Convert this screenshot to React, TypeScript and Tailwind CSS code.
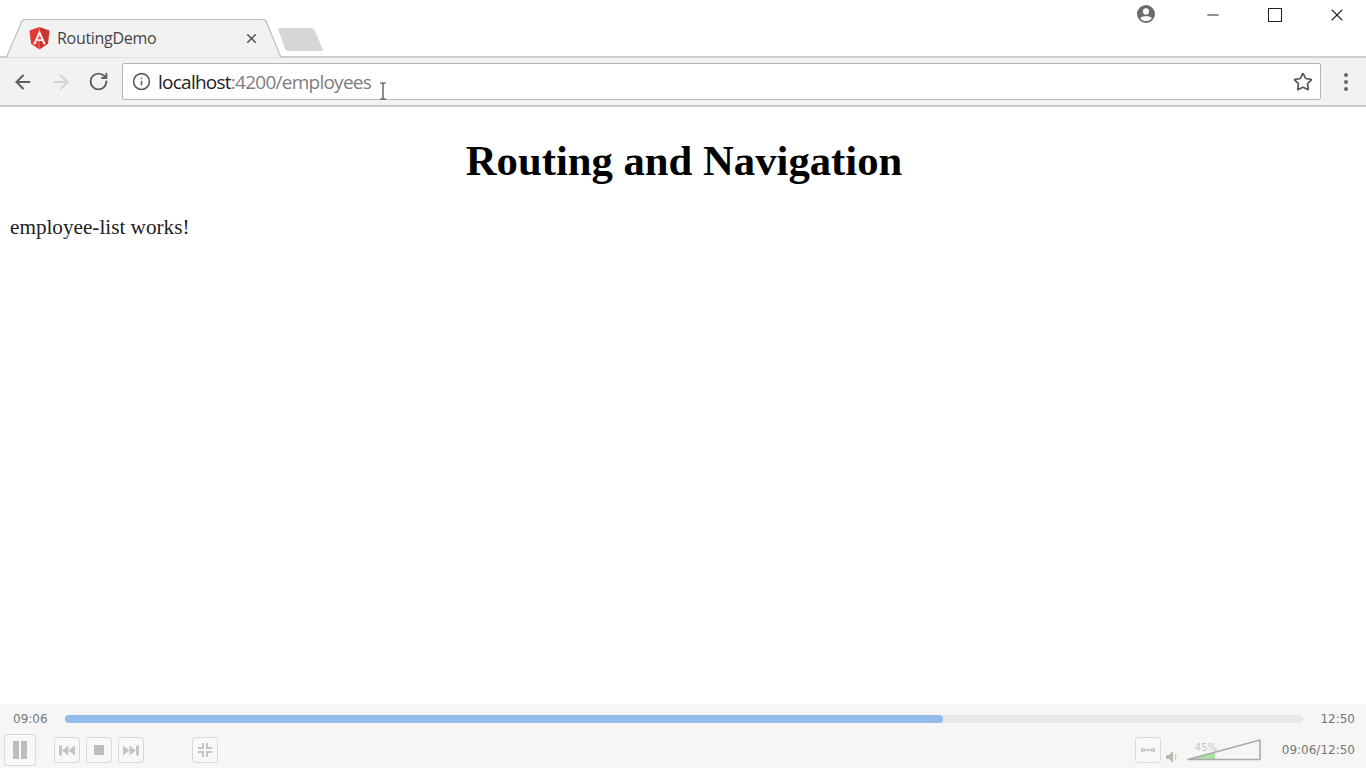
import { ArrowLeft, ArrowRight, RotateCw, Info, Star, X, Minus } from 'lucide-react';

function AngularLogo() {
    return (
        <svg width="21" height="23" viewBox="0 0 22 24" className="shrink-0">
            <path d="M11 0 L0.5 3.7 L2.1 17.6 L11 23.5 Z" fill="#e23a36" />
            <path d="M11 0 L21.5 3.7 L19.9 17.6 L11 23.5 Z" fill="#c9352f" />
            <path fillRule="evenodd" d="M11 3.2 L4.4 18 H6.9 L8.2 14.7 H13.8 L15.1 18 H17.6 Z M11 8.4 L12.9 12.7 H9.1 Z" fill="#f4eeee" />
        </svg>
    );
}

function TabStrip() {
    return (
        <div className="relative h-[58px] bg-white border-b-2 border-[#cfcfcf] shrink-0">
            <svg width="340" height="40" viewBox="0 0 340 40" className="absolute left-0 top-[19px]">
                <path d="M6 38.5 L7 37 L22 2 Q23 0.5 25 0.5 H263 Q265 0.5 266 2 L281 38.5" fill="#f2f2f2" stroke="#bdbdbd" strokeWidth="1.2" />
                <path d="M278 10 Q278 9 280 9 H311 Q313 9 314 10 L323 31 Q323.5 32 322 32 H288 Q286 32 285.5 31 Z" fill="#d6d6d6" />
            </svg>
            <div className="absolute left-[29px] top-[27px] w-[230px] flex items-center">
                <AngularLogo />
                <span className="ml-[7px] -mt-[1px] text-[16px] leading-6 text-[#444] font-['Open_Sans',sans-serif] tracking-[-0.3px]">RoutingDemo</span>
                <X size={15} strokeWidth={2.6} className="ml-auto text-[#555]" />
            </div>
            <div className="absolute right-0 top-0 w-[240px] h-[30px] flex items-center text-[#222]">
                <svg width="20" height="20" viewBox="0 0 20 20" className="absolute left-[10px] top-[4px]">
                    <circle cx="10" cy="10" r="9" fill="#6b6b6b" />
                    <circle cx="10" cy="7.4" r="3.1" fill="#fff" />
                    <path d="M4.2 14.2 C5.6 11.6 14.4 11.6 15.8 14.2 C14.5 16.1 12.4 17 10 17 C7.6 17 5.5 16.1 4.2 14.2 Z" fill="#fff" />
                </svg>
                <Minus size={18} strokeWidth={1.4} className="absolute left-[78px] top-[6px]" />
                <span className="absolute left-[142px] top-[8px] w-[14px] h-[14px] border-[1.5px] border-[#222]" />
                <X size={20} strokeWidth={1.3} className="absolute left-[201px] top-[5px]" />
            </div>
        </div>
    );
}

function Toolbar() {
    return (
        <div className="h-[49px] bg-[#f2f2f2] border-b-2 border-[#c9c9c9] flex items-center pl-[12px] pr-[18px] shrink-0">
            <ArrowLeft size={22} strokeWidth={2.2} className="text-[#5f5f5f]" />
            <ArrowRight size={22} strokeWidth={2.2} className="ml-[16px] text-[#d4d4d4]" />
            <RotateCw size={21} strokeWidth={2.2} className="ml-[16px] text-[#5f5f5f]" />
            <div className="ml-[13px] h-[37px] flex-1 bg-white rounded-[2px] border border-[#b5b5b5] flex items-center pl-[9px] pr-[7px]">
                <Info size={19} strokeWidth={2} className="text-[#5c5c5c]" />
                <span className="ml-[7px] mt-[1px] text-[19px] leading-none tracking-[-0.75px] font-['Open_Sans',sans-serif] text-[#222]">
                    localhost<span className="text-[#7d7d7d]">:4200/employees</span>
                </span>
                <Star size={20} strokeWidth={2} className="ml-auto text-[#555]" />
            </div>
            <div className="ml-[23px] flex flex-col gap-[3px]">
                <span className="w-[4px] h-[4px] rounded-full bg-[#666]" />
                <span className="w-[4px] h-[4px] rounded-full bg-[#666]" />
                <span className="w-[4px] h-[4px] rounded-full bg-[#666]" />
            </div>
        </div>
    );
}

function PlayerButton({ children, large }: { children: React.ReactNode; large?: boolean }) {
    return (
        <div className={`${large ? 'w-[32px] h-[32px]' : 'w-[26px] h-[26px]'} rounded-[3px] border border-[#d8d8d8] bg-[#f8f8f8] flex items-center justify-center text-[#c4c4c4]`}>
            {children}
        </div>
    );
}

function PlayerBar() {
    const progress = 70.9;
    return (
        <div className="h-[64px] bg-[#f6f6f6] shrink-0 font-['DejaVu_Sans',sans-serif] text-[#777] text-[12px]">
            <div className="h-[28px] pt-[2px] flex items-center pl-[13px] pr-[11px]">
                <span className="w-[52px]">09:06</span>
                <div className="flex-1 h-[8px] rounded-full bg-[#e8e8e8]">
                    <div className="h-full rounded-full bg-[#93bde8]" style={{ width: `${progress}%` }} />
                </div>
                <span className="ml-[17px]">12:50</span>
            </div>
            <div className="h-[36px] flex items-center pl-[4px] pr-[11px]">
                <PlayerButton large>
                    <div className="flex gap-[2px]">
                        <span className="w-[6px] h-[18px] bg-[#bdbdbd]" />
                        <span className="w-[6px] h-[18px] bg-[#bdbdbd]" />
                    </div>
                </PlayerButton>
                <div className="ml-[18px] flex gap-[6px]">
                    <PlayerButton>
                        <svg width="16" height="11" viewBox="0 0 16 10" fill="currentColor"><path d="M0 0h3v10H0zM9.5 0v10L3 5zM16 0v10L9.5 5z" /></svg>
                    </PlayerButton>
                    <PlayerButton>
                        <span className="w-[10px] h-[10px] bg-[#bdbdbd]" />
                    </PlayerButton>
                    <PlayerButton>
                        <svg width="16" height="11" viewBox="0 0 16 10" fill="currentColor"><path d="M16 0h-3v10h3zM6.5 0v10L13 5zM0 0v10l6.5-5z" /></svg>
                    </PlayerButton>
                </div>
                <div className="ml-[48px]">
                    <PlayerButton>
                        <svg width="14" height="14" viewBox="0 0 14 14" fill="currentColor"><path d="M4 0h2v6H0V4h4zM8 0h2v4h4v2H8zM0 8h6v6H4v-4H0zM8 8h6v2h-4v4H8z" /></svg>
                    </PlayerButton>
                </div>
                <div className="ml-auto flex items-center">
                    <PlayerButton>
                        <svg width="16" height="6" viewBox="0 0 16 6" fill="currentColor"><path d="M0 3l3.5-3v6zM16 3l-3.5-3v6zM4 1.8h2.2v2.4H4zM6.9 1.8h2.2v2.4H6.9zM9.8 1.8H12v2.4H9.8z" /></svg>
                    </PlayerButton>
                    <svg width="14" height="12" viewBox="0 0 14 12" className="ml-[5px] mt-[14px]">
                        <path d="M0 4h3l4-4v12l-4-4H0z" fill="#b9b9b9" />
                        <path d="M9 3.5q2 2.5 0 5" fill="none" stroke="#f2b865" strokeWidth="1.2" />
                    </svg>
                    <div className="relative ml-[7px] w-[74px] h-[24px]">
                        <svg width="74" height="24" viewBox="0 0 74 24" className="absolute inset-0">
                            <path d="M1 21 L28 21 L28 13.8 Z" fill="#a9e2a3" />
                            <path d="M1 21.5 L73 21.5 L73 2 Z" fill="none" stroke="#aaa" strokeWidth="1.6" strokeLinejoin="round" />
                        </svg>
                        <span className="absolute left-[8px] top-[2px] text-[10px] text-[#c4c4c4]">45%</span>
                    </div>
                    <span className="ml-[21px]">09:06/12:50</span>
                </div>
            </div>
        </div>
    );
}

export default function App() {
    return (
        <div className="w-[1366px] h-[768px] flex flex-col bg-white overflow-hidden relative">
            <TabStrip />
            <Toolbar />
            <main className="flex-1 font-['Liberation_Serif',serif] text-black">
                <h1 className="mt-[27px] pl-[2px] text-center text-[42.7px] leading-[54px] font-bold">Routing and Navigation</h1>
                <p className="mt-[25px] ml-[10px] text-[21.2px] leading-[28px] text-[#222]">employee-list works!</p>
            </main>
            <PlayerBar />
            {/* text cursor over the address bar */}
            <svg width="8" height="18" viewBox="0 0 8 18" className="absolute left-[379px] top-[82px]">
                <path d="M1 1h6M4 1v16M1 17h6" stroke="#444" strokeWidth="1.2" fill="none" />
            </svg>
        </div>
    );
}
